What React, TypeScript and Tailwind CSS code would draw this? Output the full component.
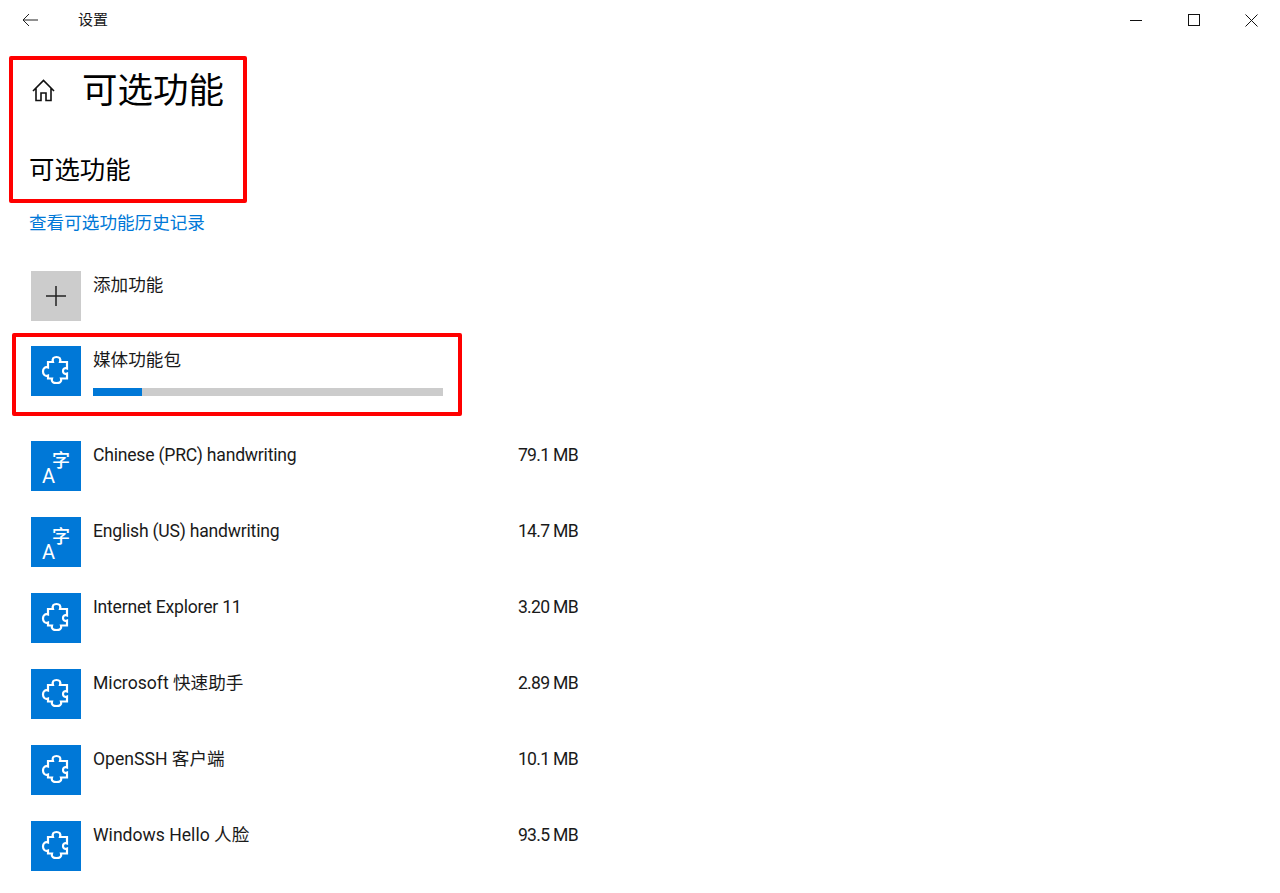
const font = { fontFamily: 'Roboto, "Noto Sans CJK SC", sans-serif' };

const features = [
  { name: 'Chinese (PRC) handwriting', size: '79.1 MB', icon: 'lang', tight: true },
  { name: 'English (US) handwriting', size: '14.7 MB', icon: 'lang', tight: true },
  { name: 'Internet Explorer 11', size: '3.20 MB', icon: 'puzzle', tight: true },
  { name: 'Microsoft 快速助手', size: '2.89 MB', icon: 'puzzle', tight: false },
  { name: 'OpenSSH 客户端', size: '10.1 MB', icon: 'puzzle', tight: false },
  { name: 'Windows Hello 人脸', size: '93.5 MB', icon: 'puzzle', tight: false },
];

function PuzzleIcon() {
  return (
    <div className="w-[50px] h-[50px] bg-[#0078d7] shrink-0">
      <svg width="50" height="50" viewBox="0 0 50 50" fill="none" stroke="white" strokeWidth="2.2">
        <path d="M17 16H22C21 12.5 22.5 11 25.5 11C28.5 11 30 12.5 29 16H36V22.5C33.5 21.5 32 23 32 25C32 27 33.5 28.5 36 27.5V32.5H30C31 36 28.5 37 25.5 37C22.5 37 20 36 21 32.5H17V29.5C14 30.5 12 28.5 12 25.5C12 22.5 14 20.5 17 21.5Z" />
      </svg>
    </div>
  );
}

function LangIcon() {
  return (
    <div className="w-[50px] h-[50px] bg-[#0078d7] shrink-0 flex text-white pl-[11px]">
      <span className="text-[20px] leading-[20px] mt-[25px]">A</span>
      <span className="text-[18px] leading-[20px] mt-[10px] -ml-[3px] font-medium">字</span>
    </div>
  );
}

export default function App() {
  return (
    <div className="w-[1280px] h-[893px] bg-white relative overflow-hidden text-[#1a1a1a]" style={font}>
      {/* title bar */}
      <div className="h-10 flex items-center">
        <svg className="ml-[22px]" width="16" height="14" viewBox="0 0 16 14" fill="none" stroke="#222" strokeWidth="1">
          <path d="M7 1L1 7L7 13M1 7H16" />
        </svg>
        <span className="ml-[40px] text-[15px] leading-5">设置</span>
        <div className="ml-auto flex items-center">
          <svg width="13" height="13" viewBox="0 0 13 13" fill="none" stroke="#111" strokeWidth="1">
            <path d="M0 6.5H12" />
          </svg>
          <svg className="ml-[45px]" width="13" height="13" viewBox="0 0 13 13" fill="none" stroke="#111" strokeWidth="1">
            <rect x="0.5" y="0.5" width="11" height="11" />
          </svg>
          <svg className="ml-[44px] mr-[22px]" width="13" height="13" viewBox="0 0 13 13" fill="none" stroke="#111" strokeWidth="1">
            <path d="M0.5 0.5L12.5 12.5M12.5 0.5L0.5 12.5" />
          </svg>
        </div>
      </div>

      {/* page heading */}
      <div className="h-[60px] mt-[20px] ml-[32px] flex items-center text-black">
        <svg width="23" height="23" viewBox="0 0 23 23" fill="none" stroke="#111" strokeWidth="1.6">
          <path d="M1 12L11.5 1.5L22 12M4 9.5V21.5H9V14H14V21.5H19V9.5" />
        </svg>
        <h1 className="ml-[27px] mt-[1px] text-[35.5px] leading-[44px] font-normal">可选功能</h1>
      </div>
      <h2 className="mt-[33px] ml-[29px] text-[25.4px] leading-[34px] text-black">可选功能</h2>
      <a className="block mt-[24px] ml-[29px] text-[17.6px] leading-6 text-[#0078d7]">查看可选功能历史记录</a>

      {/* add */}
      <div className="mt-[36px] ml-[31px] flex gap-3">
        <div className="w-[50px] h-[50px] bg-[#cccccc] flex items-center justify-center shrink-0">
          <svg width="20" height="20" viewBox="0 0 20 20" fill="none" stroke="#222" strokeWidth="1.5">
            <path d="M10 0V20M0 10H20" />
          </svg>
        </div>
        <span className="text-[17.6px] leading-[26px] mt-[1px]">添加功能</span>
      </div>

      {/* downloading */}
      <div className="mt-[25px] ml-[31px] flex gap-3">
        <PuzzleIcon />
        <div className="w-[350px]">
          <div className="text-[17.6px] leading-[26px] mt-[1px]">媒体功能包</div>
          <div className="h-2 mt-[15px] bg-[#cccccc]">
            <div className="h-2 bg-[#0078d7]" style={{ width: '14%' }} />
          </div>
        </div>
      </div>

      {/* installed */}
      <div className="mt-[45px] ml-[31px] w-[547px] flex flex-col gap-[26px]">
        {features.map((f) => (
          <div key={f.name} className="flex gap-3 h-[50px]">
            {f.icon === 'lang' ? <LangIcon /> : <PuzzleIcon />}
            <span className={`text-[17.6px] leading-[26px] mt-[1px] ${f.tight ? 'tracking-[-0.22px]' : ''}`}>{f.name}</span>
            <span className="ml-auto text-[17.6px] leading-[26px] mt-[1px] tracking-[-0.7px]">{f.size}</span>
          </div>
        ))}
      </div>

      {/* red annotation boxes */}
      <div className="absolute left-[9px] top-[56px] w-[238px] h-[147px] border-[4px] border-[#ff0000] rounded-[2px]" />
      <div className="absolute left-[12px] top-[333px] w-[450px] h-[83px] border-[4px] border-[#ff0000] rounded-[2px]" />
    </div>
  );
}
